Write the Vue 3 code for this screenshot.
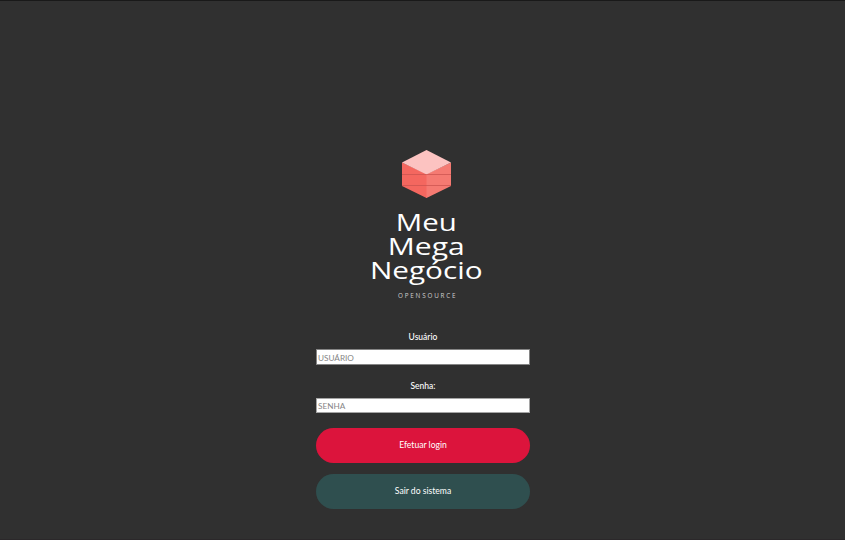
<script setup>
import { ref } from 'vue'

const user = ref('')
const password = ref('')
</script>

<template>
  <main class="screen">
    <svg class="logo" width="125" height="155" viewBox="0 0 125 155" role="img" aria-label="Meu Mega Negócio">
      <path d="M38 14.5 63 26 63 50 62.5 50 38 38Z" fill="#f4675f" />
      <path d="M87 14.5 62.5 26 62.5 50 87 38Z" fill="#f57a72" />
      <path d="M62.5 2 87 14.5 62.5 26.5 38 14.5Z" fill="#fcc3c1" />
      <path d="M38 26.5H87M38 37.5H87" stroke="#c9524e" stroke-width="1" opacity=".7" />
      <g class="name">
        <text x="31.7" y="83.3" textLength="61" lengthAdjust="spacingAndGlyphs">Meu</text>
        <text x="23.8" y="107.3" textLength="77" lengthAdjust="spacingAndGlyphs">Mega</text>
        <text x="6" y="131.3" textLength="112.5" lengthAdjust="spacingAndGlyphs">Negócio</text>
      </g>
      <text class="tag" x="34" y="149.8" textLength="57.5">OPENSOURCE</text>
    </svg>
    <form class="form" @submit.prevent>
      <label class="label" for="user">Usuário</label>
      <input id="user" v-model="user" class="field user" placeholder="USUÁRIO" />
      <label class="label second" for="password">Senha:</label>
      <input id="password" v-model="password" class="field" type="password" placeholder="SENHA" />
      <button class="btn primary" type="submit">Efetuar login</button>
      <button class="btn exit" type="button">Sair do sistema</button>
    </form>
  </main>
</template>

<style>
body {
  background: #303030;
}
</style>

<style scoped>
.screen {
  box-sizing: border-box;
  height: 540px;
  padding-top: 147px;
  border-top: 1px solid #191919;
  border-bottom: 1px solid #2b282a;
  background: #303030;
  color: #fff;
  font-family: Lato, sans-serif;
  overflow: hidden;
}
.logo {
  display: block;
  margin-left: 364px;
}
.name {
  font: 400 24.5px "Open Sans", sans-serif;
  fill: #fff;
}
.tag {
  font: 400 6.3px "Open Sans", sans-serif;
  fill: #cfcfcf;
}
.form {
  display: flex;
  flex-direction: column;
  width: 214px;
  margin: 28px 0 0 316px;
}
.label {
  height: 12px;
  margin-bottom: 6px;
  font-size: 8.5px;
  font-weight: 500;
  line-height: 12px;
  text-align: center;
}
.label.second {
  margin-top: 15px;
}
.field {
  box-sizing: border-box;
  width: 214px;
  height: 15px;
  margin: 0;
  padding: 1px 1px 0;
  border: 1px solid #a5a5a5;
  border-radius: 0;
  background: #fff;
  color: #222;
  font: 400 8.2px/12px Lato, sans-serif;
  outline: none;
}
.field.user {
  height: 16px;
  border-color: #858585;
}
.field::placeholder {
  color: #858585;
  opacity: 1;
}
.btn {
  height: 35.5px;
  padding: 0;
  border: 0;
  border-radius: 18px;
  color: #fff;
  font: 400 8.6px/12px Lato, sans-serif;
}
.primary {
  margin-top: 14.5px;
  background: #dc143c;
}
.exit {
  margin-top: 10.5px;
  background: #2f4f4f;
}
</style>
